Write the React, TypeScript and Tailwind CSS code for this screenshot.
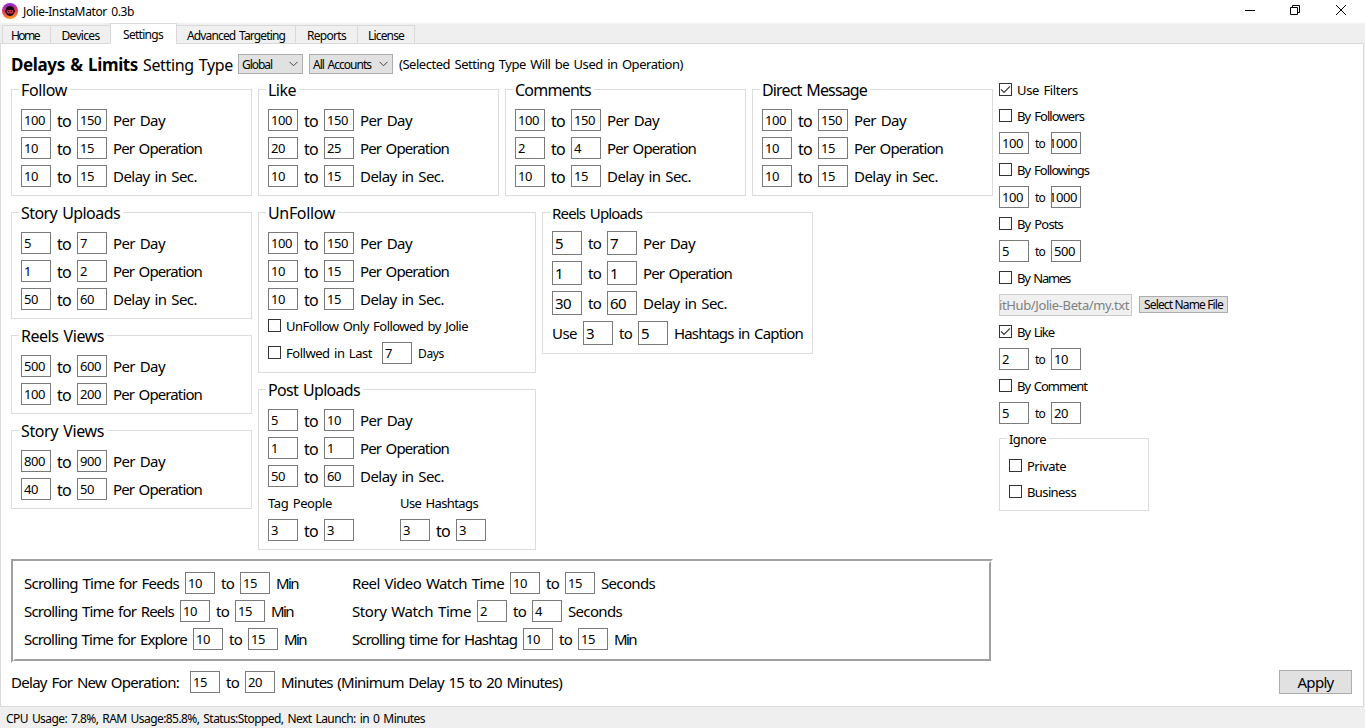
import React, { useLayoutEffect, useRef, useState } from "react";

/* Single-line text fitted to a fixed advance width. */
function T({ children, w, c = "text-[15px]" }: { children: string; w: number; c?: string }) {
  const ref = useRef<HTMLSpanElement>(null);
  const [gap, setGap] = useState(0);
  useLayoutEffect(() => {
    if (ref.current) {
      const natural = ref.current.getBoundingClientRect().width;
      setGap((w - natural) / children.length);
    }
  }, []);
  return (
    <span className={`block shrink-0 whitespace-pre ${c}`} style={{ width: w }}>
      <span ref={ref} className="inline-block" style={{ letterSpacing: gap }}>
        {children}
      </span>
    </span>
  );
}

function Field({ v, big = false }: { v: string; big?: boolean }) {
  const long = v.length > 3;
  return (
    <div
      className={`flex w-[30px] shrink-0 items-center overflow-hidden border border-[#7a7a7a] bg-white ${
        big ? "h-6" : "h-[22px]"
      } ${long ? "justify-end pr-[3px]" : "pl-[2px]"}`}
    >
      <T w={v.length * (big ? 8 : 7)} c={big ? "text-[15px]" : "text-[13px]"}>
        {v}
      </T>
    </div>
  );
}

const WIDTHS: Record<string, number> = { "Per Day": 52, "Per Operation": 89, "Delay in Sec.": 84 };

function Range({ a, b, label }: { a: string; b: string; label?: string }) {
  return (
    <div className="flex h-[22px] items-center gap-1.5">
      <Field v={a} />
      <T w={14} c="text-[16px] pt-[2px]">to</T>
      <Field v={b} />
      {label && <T w={WIDTHS[label]}>{label}</T>}
    </div>
  );
}

function Group({
  title,
  tw,
  size = "text-[16px]",
  className,
  children,
}: {
  title: string;
  tw: number;
  size?: string;
  className: string;
  children: React.ReactNode;
}) {
  return (
    <section className={`border border-[#dcdcdc] ${className}`}>
      <div className="-mt-[9px] ml-[7px] flex h-[18px] w-fit items-center bg-white pr-[3px] pl-[2px]">
        <T w={tw} c={size}>{title}</T>
      </div>
      <div className="pt-2.5 pl-[9px]">{children}</div>
    </section>
  );
}

function Ranges({ rows }: { rows: string[][] }) {
  return (
    <div className="flex flex-col gap-1.5">
      {rows.map(([a, b, l], i) => (
        <Range key={i} a={a} b={b} label={l} />
      ))}
    </div>
  );
}

function Check({ on = false, label, w }: { on?: boolean; label: string; w: number }) {
  return (
    <div className="flex h-[13px] items-center gap-[5px]">
      <span className="flex size-[13px] shrink-0 items-center justify-center border border-[#333333]">
        {on && (
          <svg width="11" height="11" viewBox="0 0 11 11" fill="none" stroke="#333" strokeWidth="1.2">
            <path d="M1 5.3 4 8.3 10 2.3" />
          </svg>
        )}
      </span>
      <T w={w} c="text-[13px] leading-[16px] pt-px">{label}</T>
    </div>
  );
}

function Select({ label, w, className }: { label: string; w: number; className: string }) {
  return (
    <div className={`flex h-5 items-center justify-between border border-[#adadad] bg-[#e1e1e1] pr-[4px] pl-[3px] ${className}`}>
      <T w={w} c="text-[12px] pt-[2px]">{label}</T>
      <svg width="9" height="6" viewBox="0 0 9 6" fill="none" stroke="#444" strokeWidth="1">
        <path d="M.5.8 4.5 4.8 8.5.8" />
      </svg>
    </div>
  );
}

function Timing({ label, lw, a, b, unit, uw }: { label: string; lw: number; a: string; b: string; unit: string; uw: number }) {
  return (
    <div className="flex h-[22px] items-center gap-1.5">
      <T w={lw}>{label}</T>
      <Field v={a} />
      <T w={13}>to</T>
      <Field v={b} />
      <T w={uw}>{unit}</T>
    </div>
  );
}

function BigRange({ pre, a, b, label, w }: { pre?: string; a: string; b: string; label: string; w: number }) {
  return (
    <div className="flex h-6 items-center gap-1.5">
      {pre && <T w={25}>{pre}</T>}
      <Field v={a} big />
      <T w={13}>to</T>
      <Field v={b} big />
      <T w={w}>{label}</T>
    </div>
  );
}

function Filter({ on, label, w, a, b }: { on?: boolean; label: string; w: number; a: string; b: string }) {
  return (
    <div className="h-[54px]">
      <Check on={on} label={label} w={w} />
      <div className="mt-2.5 flex h-[22px] items-center">
        <Field v={a} />
        <div className="pr-[6px] pl-[6px]">
          <T w={10} c="text-[12px] pt-[2px]">to</T>
        </div>
        <Field v={b} />
      </div>
    </div>
  );
}

const TOP = [
  { title: "Follow", tw: 46, rows: [["100", "150"], ["10", "15"], ["10", "15"]] },
  { title: "Like", tw: 28, rows: [["100", "150"], ["20", "25"], ["10", "15"]] },
  { title: "Comments", tw: 76, rows: [["100", "150"], ["2", "4"], ["10", "15"]] },
  { title: "Direct Message", tw: 105, rows: [["100", "150"], ["10", "15"], ["10", "15"]] },
];
const UNITS = ["Per Day", "Per Operation", "Delay in Sec."];
const withUnits = (rows: string[][]) => rows.map((r, i) => [...r, UNITS[i]]);

const TABS = [
  { name: "Home", w: 28, cls: "w-[49px] border-l pr-[3px]" },
  { name: "Devices", w: 38, cls: "w-[60px]" },
  { name: "Settings", w: 40, cls: "" },
  { name: "Advanced Targeting", w: 98, cls: "w-[119px]" },
  { name: "Reports", w: 39, cls: "w-[62px]" },
  { name: "License", w: 36, cls: "w-[57px]" },
];

export default function App() {
  return (
    <div className="flex h-[728px] w-[1365px] flex-col overflow-hidden bg-[#efefef] font-['Noto_Sans',sans-serif] leading-[18px] text-black [word-spacing:0.09em]">
      <header className="flex h-[23px] shrink-0 items-center bg-white pl-[2px]">
        <svg className="mb-px" width="16" height="16" viewBox="0 0 16 16">
          <defs>
            <linearGradient id="ring" x1="0.35" y1="0" x2="0.5" y2="1">
              <stop offset="0" stopColor="#7d2be6" />
              <stop offset="0.45" stopColor="#e0306c" />
              <stop offset="1" stopColor="#ff9a1c" />
            </linearGradient>
          </defs>
          <circle cx="8" cy="8" r="8" fill="url(#ring)" />
          <path d="M8 3C5.4 3 4.2 4.4 3.8 6.4 2.6 7 2.6 9.4 4 10c.6 1.8 2 3 4 3s3.400-1.200 4-3c1.400-.6 1.400-3 .2-3.600C11.800 4.400 10.600 3 8 3Z" fill="#1c0812" />
          <rect x="4.600" y="7" width="6.800" height="3.400" rx="1.400" fill="#c93348" />
          <path d="M5.800 8.300h1.400M8.800 8.300h1.400" stroke="#1c0812" />
        </svg>
        <div className="ml-[5px] pt-px">
          <T w={111} c="text-[12px]">Jolie-InstaMator 0.3b</T>
        </div>
        <div className="mr-[19px] mb-[3px] ml-auto flex items-center">
          <svg width="10" height="10" viewBox="0 0 10 10" stroke="#000" fill="none"><path d="M0 5.500h10" /></svg>
          <svg className="ml-[35px]" width="10" height="10" viewBox="0 0 10 10" stroke="#000" fill="none"><path d="M.5 2.500h7v7h-7ZM2.500 2.500v-2h7v7h-2" /></svg>
          <svg className="ml-9" width="10" height="10" viewBox="0 0 10 10" stroke="#000" fill="none"><path d="M0 0 10 10M10 0 0 10" /></svg>
        </div>
      </header>

      <nav className="z-10 -mb-px flex h-[21px] shrink-0 items-end pl-[2px]">
        {TABS.map((t) =>
          t.name === "Settings" ? (
            <div key={t.name} className="-ml-px flex h-[21px] w-[67px] justify-center border-x border-t border-[#d9d9d9] bg-white pt-[2px] pr-px">
              <T w={t.w} c="text-[12px]">{t.name}</T>
            </div>
          ) : (
            <div key={t.name} className={`flex h-[19px] justify-center border-y border-r border-[#d9d9d9] bg-[#f0f0f0] pt-px ${t.cls}`}>
              <T w={t.w} c="text-[12px]">{t.name}</T>
            </div>
          ),
        )}
      </nav>

      <main className="h-[664px] w-[1364px] shrink-0 border border-[#d9d9d9] bg-white pt-2.5 pl-2.5">
        <div className="flex h-5 items-center">
          <T w={127} c="text-[17px] font-bold pt-[2px]">Delays &amp; Limits</T>
          <div className="ml-[5px]"><T w={90} c="text-[16px] pt-[2px]">Setting Type</T></div>
          <Select label="Global" w={30} className="ml-[5px] w-[65px]" />
          <Select label="All Accounts" w={58} className="ml-[6px] w-[84px]" />
          <div className="ml-[6px]"><T w={284} c="text-[13px]">(Selected Setting Type Will be Used in Operation)</T></div>
        </div>

        <div className="flex">
          <div className="w-[982px] shrink-0 pt-[15px]">
            <div className="flex gap-1.5">
              {TOP.map((g) => (
                <Group key={g.title} title={g.title} tw={g.tw} className="h-[107px] w-[241px]">
                  <Ranges rows={withUnits(g.rows)} />
                </Group>
              ))}
            </div>
            <div className="mt-4 flex h-[338px] items-start gap-1.5">
              <div className="flex flex-col gap-4">
                <Group title="Story Uploads" tw={99} className="h-[107px] w-[241px]">
                  <Ranges rows={withUnits([["5", "7"], ["1", "2"], ["50", "60"]])} />
                </Group>
                <Group title="Reels Views" tw={83} className="h-[79px] w-[241px]">
                  <Ranges rows={withUnits([["500", "600"], ["100", "200"]])} />
                </Group>
                <Group title="Story Views" tw={83} className="h-[79px] w-[241px]">
                  <Ranges rows={withUnits([["800", "900"], ["40", "50"]])} />
                </Group>
              </div>
              <div className="flex flex-col gap-4">
                <Group title="UnFollow" tw={67} className="h-[161px] w-[278px]">
                  <Ranges rows={withUnits([["100", "150"], ["10", "15"], ["10", "15"]])} />
                  <div className="mt-[9px]"><Check label="UnFollow Only Followed by Jolie" w={182} /></div>
                  <div className="mt-2.5 flex h-[22px] items-center">
                    <div className="-mt-px"><Check label="Follwed in Last" w={86} /></div>
                    <div className="ml-2.5"><Field v="7" /></div>
                    <div className="ml-1.5"><T w={26} c="text-[12px] pt-[2px]">Days</T></div>
                  </div>
                </Group>
                <Group title="Post Uploads" tw={92} className="h-[161px] w-[278px]">
                  <Ranges rows={withUnits([["5", "10"], ["1", "1"], ["50", "60"]])} />
                  <div className="mt-[7px] flex gap-[46px]">
                    <div className="w-[86px]">
                      <T w={64} c="text-[13px] h-[25px]">Tag People</T>
                      <Range a="3" b="3" />
                    </div>
                    <div className="w-[86px]">
                      <T w={78} c="text-[13px] h-[25px]">Use Hashtags</T>
                      <Range a="3" b="3" />
                    </div>
                  </div>
                </Group>
              </div>
              <Group title="Reels Uploads" tw={90} size="text-[15px]" className="h-[142px] w-[271px]">
                <div className="-mt-px flex flex-col gap-1.5">
                  <BigRange a="5" b="7" label="Per Day" w={52} />
                  <BigRange a="1" b="1" label="Per Operation" w={89} />
                  <BigRange a="30" b="60" label="Delay in Sec." w={84} />
                  <BigRange pre="Use" a="3" b="5" label="Hashtags in Caption" w={129} />
                </div>
              </Group>
            </div>
            <div className="mt-[9px] h-[104px] border-2 border-t-[#a0a0a0] border-r-white border-b-white border-l-[#a0a0a0]">
              <div className="flex h-full border-2 border-t-white border-r-[#a0a0a0] border-b-[#a0a0a0] border-l-white pt-[9px] pl-[9px]">
                <div className="flex w-[328px] flex-col gap-1.5">
                  <Timing label="Scrolling Time for Feeds" lw={155} a="10" b="15" unit="Min" uw={22} />
                  <Timing label="Scrolling Time for Reels" lw={150} a="10" b="15" unit="Min" uw={22} />
                  <Timing label="Scrolling Time for Explore" lw={163} a="10" b="15" unit="Min" uw={22} />
                </div>
                <div className="flex flex-col gap-1.5">
                  <Timing label="Reel Video Watch Time" lw={152} a="10" b="15" unit="Seconds" uw={54} />
                  <Timing label="Story Watch Time" lw={119} a="2" b="4" unit="Seconds" uw={54} />
                  <Timing label="Scrolling time for Hashtag" lw={165} a="10" b="15" unit="Min" uw={22} />
                </div>
              </div>
            </div>
          </div>

          <div className="ml-1.5 w-[240px] pt-[9px]">
            <div className="h-[26px]"><Check on label="Use Filters" w={61} /></div>
            <Filter label="By Followers" w={67} a="100" b="1000" />
            <Filter label="By Followings" w={72} a="100" b="1000" />
            <Filter label="By Posts" w={46} a="5" b="500" />
            <div className="h-[54px]">
              <Check label="By Names" w={53} />
              <div className="mt-2.5 flex h-[22px] items-center">
                <div className="flex h-[22px] w-[133px] items-center justify-end overflow-hidden border border-[#cccccc] bg-[#f0f0f0] pr-[2px] text-[#808080]">
                  <T w={130} c="text-[13px]">itHub/Jolie-Beta/my.txt</T>
                </div>
                <button className="-mt-px ml-[7px] flex h-[17px] w-[89px] items-center justify-center border border-[#adadad] bg-[#e1e1e1]">
                  <T w={79} c="text-[12px] pt-px">Select Name File</T>
                </button>
              </div>
            </div>
            <Filter on label="By Like" w={37} a="2" b="10" />
            <Filter label="By Comment" w={70} a="5" b="20" />
            <Group title="Ignore" tw={37} size="text-[13px]" className="mt-[5px] h-[73px] w-[150px]">
              <div className="flex flex-col gap-[13px] pt-px">
                <Check label="Private" w={39} />
                <Check label="Business" w={49} />
              </div>
            </Group>
          </div>
        </div>

        <div className="mt-[7px] flex h-6 items-center pr-[11px]">
          <T w={168}>Delay For New Operation:</T>
          <div className="ml-[11px] flex items-center gap-1.5">
            <Field v="15" />
            <T w={13}>to</T>
            <Field v="20" />
            <T w={281}>Minutes (Minimum Delay 15 to 20 Minutes)</T>
          </div>
          <button className="ml-auto flex h-6 w-[73px] items-center justify-center border border-[#adadad] bg-[#e1e1e1]">
            <T w={36}>Apply</T>
          </button>
        </div>
      </main>

      <footer className="flex h-[21px] items-center pt-[3px] pl-[6px]">
        <T w={419} c="text-[12px]">CPU Usage: 7.8%, RAM Usage:85.8%, Status:Stopped, Next Launch: in 0 Minutes</T>
      </footer>
    </div>
  );
}
